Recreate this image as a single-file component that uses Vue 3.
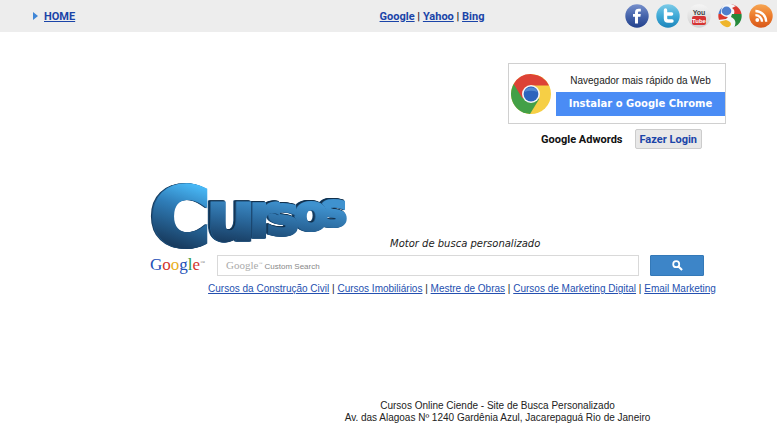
<template>
    <div class="page">
        <header class="topbar">
            <nav class="home">
                <svg class="arrow" viewBox="0 0 5 8" aria-hidden="true">
                    <path d="M0 0 L5 4 L0 8 Z" fill="#3f86d6" />
                </svg>
                <a href="#">HOME</a>
            </nav>
            <nav class="engines">
                <template v-for="(engine, i) in engines" :key="engine">
                    <span v-if="i > 0"> | </span><a href="#">{{ engine }}</a>
                </template>
            </nav>
            <nav class="social">
                <a href="#" aria-label="Facebook">
                    <svg viewBox="0 0 24 24">
                        <defs>
                            <linearGradient id="fb" x1="0" y1="0" x2="0" y2="1">
                                <stop offset="0" stop-color="#7790cc" />
                                <stop offset="0.5" stop-color="#4664ab" />
                                <stop offset="1" stop-color="#23418c" />
                            </linearGradient>
                        </defs>
                        <circle cx="12" cy="12" r="11.7" fill="url(#fb)" />
                        <path d="M10 19.5 V12.8 H8 V10 H10 V8.3 C10 5.8 11.4 4.7 13.6 4.7 H15.8 V7.5 H14.3 C13.3 7.5 13 7.9 13 8.8 V10 H15.8 L15.4 12.8 H13 V19.5 Z"
                            fill="#fff" />
                    </svg>
                </a>
                <a href="#" aria-label="Twitter">
                    <svg viewBox="0 0 24 24">
                        <defs>
                            <linearGradient id="tw" x1="0" y1="0" x2="0" y2="1">
                                <stop offset="0" stop-color="#7ccbe8" />
                                <stop offset="0.5" stop-color="#3fa9d6" />
                                <stop offset="1" stop-color="#1d85bb" />
                            </linearGradient>
                        </defs>
                        <circle cx="12" cy="12" r="11.7" fill="url(#tw)" />
                        <path d="M9.5 6 V14.5 C9.5 16.3 10.5 17 12 17 H16 M9.5 10 H15.6" fill="none" stroke="#fff"
                            stroke-width="3.4" stroke-linecap="round" />
                    </svg>
                </a>
                <a href="#" aria-label="YouTube">
                    <svg viewBox="0 0 24 24">
                        <defs>
                            <linearGradient id="yt" x1="0" y1="0" x2="0" y2="1">
                                <stop offset="0" stop-color="#f5f5f5" />
                                <stop offset="1" stop-color="#d2d2d2" />
                            </linearGradient>
                        </defs>
                        <circle cx="12" cy="12" r="11.7" fill="url(#yt)" />
                        <text x="12" y="11" class="yt-you">You</text>
                        <rect x="5" y="12" width="14" height="9" rx="2" fill="#d63434" />
                        <text x="12" y="19" class="yt-tube">Tube</text>
                    </svg>
                </a>
                <a href="#" aria-label="Google">
                    <svg viewBox="0 0 24 24">
                        <defs>
                            <clipPath id="ball">
                                <circle cx="12" cy="12" r="11.7" />
                            </clipPath>
                        </defs>
                        <g clip-path="url(#ball)">
                            <rect width="24" height="24" fill="#f4f6fa" />
                            <path d="M13 0 H24 V10 H16 C17 7 16 5 14 4 L18 2 Z" fill="#d9392f" />
                            <path d="M14 10 H24 V21 L16 24 C19 18 17 15 13 13 Z" fill="#26893b" />
                            <path d="M0 10 H3 C5 12 7 13 10 13 L8 15 L0 16 Z" fill="#d9392f" />
                            <path d="M0 18 L8 16 C11 17 13 18 13 20 C13 22 11 23 8 24 H0 Z" fill="#efb52b" />
                            <ellipse cx="8.5" cy="7" rx="4.8" ry="4.4" fill="#4f7fce" />
                            <path d="M0 8 C0 4 3 2 5 2 C3 4 3 7 3 10 H0 Z" fill="#4f7fce" />
                        </g>
                    </svg>
                </a>
                <a href="#" aria-label="RSS">
                    <svg viewBox="0 0 24 24">
                        <defs>
                            <linearGradient id="rss" x1="0" y1="0" x2="0" y2="1">
                                <stop offset="0" stop-color="#f6a552" />
                                <stop offset="0.5" stop-color="#ec7b2b" />
                                <stop offset="1" stop-color="#d8571a" />
                            </linearGradient>
                        </defs>
                        <circle cx="12" cy="12" r="11.7" fill="url(#rss)" />
                        <circle cx="8.3" cy="16" r="1.9" fill="#fff" />
                        <path d="M6.4 11.2 A6.6 6.6 0 0 1 13 17.8 M6.4 7 A10.8 10.8 0 0 1 17.2 17.8" fill="none"
                            stroke="#fff" stroke-width="2.3" />
                    </svg>
                </a>
            </nav>
        </header>

        <main>
            <aside class="promo">
                <div class="chrome-box">
                    <svg class="chrome-logo" viewBox="0 0 40 40" aria-hidden="true">
                        <circle cx="20" cy="20" r="20" fill="#f6cf45" />
                        <path d="M20 20 L2.7 10 A20 20 0 0 0 19 40 L28.2 25 Z" fill="#43a047" />
                        <path d="M2.7 10 A20 20 0 0 1 38 11.5 H20 L11.5 24.5 Z" fill="#dd4236" />
                        <circle cx="20" cy="20" r="9" fill="#f5f5f5" />
                        <circle cx="20" cy="20" r="7.4" fill="#2c64bd" />
                        <path d="M13.5 18 A7 7 0 0 1 26.5 18 Q20 15.5 13.5 18 Z" fill="#5289d2" />
                    </svg>
                    <div class="chrome-text">
                        <p>Navegador mais rápido da Web</p>
                        <button type="button">Instalar o Google Chrome</button>
                    </div>
                </div>
                <div class="adwords">
                    <strong>Google Adwords</strong>
                    <button type="button">Fazer Login</button>
                </div>
            </aside>

            <section class="search">
                <div class="brand">
                    <svg class="cursos" viewBox="0 0 200 70" role="img" aria-label="Cursos">
                        <defs>
                            <linearGradient id="face-big" gradientUnits="userSpaceOnUse" x1="56" y1="4" x2="36" y2="66">
                                <stop offset="0" stop-color="#4abcfa" />
                                <stop offset="0.4" stop-color="#2f7db8" />
                                <stop offset="1" stop-color="#183c60" />
                            </linearGradient>
                            <linearGradient id="face" gradientUnits="userSpaceOnUse" x1="100" y1="14" x2="94" y2="60">
                                <stop offset="0" stop-color="#3f92cf" />
                                <stop offset="0.5" stop-color="#2a689c" />
                                <stop offset="1" stop-color="#193f65" />
                            </linearGradient>
                        </defs>
                        <text v-for="letter in letters" :key="letter.x" :class="letter.char === 'C' ? 'big' : 'small'"
                            :x="letter.x" :y="letter.y" :font-size="letter.size">{{ letter.char }}</text>
                    </svg>
                    <em>Motor de busca personalizado</em>
                </div>

                <form class="search-form" @submit.prevent>
                    <label class="google" for="q">
                        <span v-for="(c, i) in 'Google'" :key="i" :class="googleColors[i]">{{ c }}</span><sup>™</sup>
                    </label>
                    <div class="field">
                        <input id="q" v-model="query" type="text">
                        <div v-if="!query" class="hint"><span>Google<sup>™</sup></span> Custom Search</div>
                    </div>
                    <button type="submit" aria-label="Pesquisar">
                        <svg viewBox="0 0 12 12">
                            <circle cx="4.6" cy="4.6" r="3.3" fill="none" stroke="#fff" stroke-width="1.9" />
                            <path d="M7 7 L11 11" stroke="#fff" stroke-width="2.2" />
                        </svg>
                    </button>
                </form>

                <nav class="courses">
                    <template v-for="(course, i) in courses" :key="course">
                        <span v-if="i > 0"> | </span><a href="#">{{ course }}</a>
                    </template>
                </nav>
            </section>
        </main>

        <footer>
            <p>Cursos Online Ciende - Site de Busca Personalizado</p>
            <p>Av. das Alagoas Nº 1240 Gardênia Azul, Jacarepaguá Rio de Janeiro</p>
        </footer>
    </div>
</template>

<script setup>
import { ref } from 'vue'

const query = ref('')

const engines = ['Google', 'Yahoo', 'Bing']

const courses = [
    'Cursos da Construção Civil',
    'Cursos Imobiliários',
    'Mestre de Obras',
    'Cursos de Marketing Digital',
    'Email Marketing'
]

const googleColors = ['blue', 'red', 'yellow', 'blue', 'green', 'red']

// back letters first, so that the ones in front cover their sides
const letters = [
    { char: 's', x: 170, y: 43, size: 46 },
    { char: 'o', x: 144, y: 47, size: 50 },
    { char: 's', x: 117, y: 51, size: 54 },
    { char: 'r', x: 99, y: 54, size: 60 },
    { char: 'u', x: 57, y: 57, size: 68 },
    { char: 'C', x: 2, y: 62, size: 78 }
]
</script>

<style>
body {
    margin: 0;
    background: #fff;
}
</style>

<style scoped>
.page {
    font-family: "Liberation Sans", Arial, sans-serif;
    font-size: 10px;
    line-height: 12px;
    color: #222;
}

p {
    margin: 0;
}

a {
    color: #1a44a8;
}

button {
    font-family: inherit;
    cursor: pointer;
}

.topbar {
    display: grid;
    grid-template-columns: 1fr auto 1fr;
    align-items: center;
    height: 32px;
    padding: 0 4px 0 33px;
    background: #ededed;
    font: bold 11px Roboto, sans-serif;
}

.engines {
    padding-left: 58px;
    white-space: pre;
}

.home {
    display: flex;
    align-items: center;
    gap: 6px;
}

.arrow {
    width: 5px;
    height: 8px;
}

.social {
    display: flex;
    justify-content: flex-end;
    gap: 7px;
}

.social svg {
    display: block;
    width: 24px;
    height: 24px;
}

.yt-you,
.yt-tube {
    font-family: "Liberation Sans", Arial, sans-serif;
    font-size: 7px;
    font-weight: bold;
    text-anchor: middle;
    fill: #444;
}

.yt-tube {
    font-size: 6px;
    fill: #fff;
}

main {
    padding: 31px 51px 0 150px;
}

.promo {
    display: flex;
    flex-direction: column;
    align-items: flex-end;
    gap: 5px;
}

.chrome-box {
    display: flex;
    align-items: center;
    gap: 5px;
    box-sizing: border-box;
    width: 218px;
    height: 61px;
    padding-left: 2px;
    border: 1px solid #d0d0d0;
}

.chrome-logo {
    flex: none;
    width: 40px;
    height: 40px;
}

.chrome-text {
    flex: 1;
    text-align: center;
}

.chrome-text p {
    margin: 3px 0 5px;
}

.chrome-text button {
    width: 100%;
    height: 24px;
    padding: 0;
    border: 0;
    background: #4a8cf5;
    color: #fff;
    font: bold 10px "DejaVu Sans", Verdana, sans-serif;
}

.adwords {
    display: flex;
    align-items: center;
    gap: 12px;
    padding-right: 24px;
    color: #111;
    font: 11px Roboto, sans-serif;
}

.adwords button {
    height: 20px;
    padding: 0 4px;
    border: 1px solid #ccc;
    border-radius: 2px;
    background: #e8e8e8;
    color: #1a44a8;
    font-size: 11px;
    font-weight: bold;
}

.brand {
    display: flex;
    align-items: flex-end;
    gap: 40px;
    margin-top: 34px;
}

.cursos {
    width: 200px;
    height: 70px;
    overflow: visible;
    font-family: "DejaVu Sans", sans-serif;
    font-weight: bold;
}

.big {
    fill: url(#face-big);
    stroke: url(#face-big);
    stroke-width: 6;
    filter: drop-shadow(-1px 0 0 #1f5584) drop-shadow(-1px 0 0 #173c5e);
}

.small {
    fill: url(#face);
    stroke: url(#face);
    stroke-width: 3;
    filter: drop-shadow(-1px 0 0 #1f5584) drop-shadow(-1px -1px 0 #122f4a) drop-shadow(-1px 0 0 #1b4a74);
}

.brand em {
    padding-bottom: 3px;
    font-family: "DejaVu Sans", Verdana, sans-serif;
}

.search-form {
    display: flex;
    align-items: center;
    gap: 11px;
    margin-top: 1px;
    padding-right: 22px;
}

.google {
    width: 56px;
    font-family: "Liberation Serif", serif;
    font-size: 17px;
    line-height: 22px;
    white-space: nowrap;
}

.google sup {
    font-size: 5px;
    color: #888;
    vertical-align: 6px;
    line-height: 1;
}

.blue {
    color: #2450b8;
}

.red {
    color: #d3352c;
}

.yellow {
    color: #e8b021;
}

.green {
    color: #2f9a3f;
}

.field {
    position: relative;
    flex: 1;
}

.field input {
    display: block;
    box-sizing: border-box;
    width: 100%;
    height: 21px;
    padding: 0 8px;
    border: 1px solid #d9d9d9;
    font: 11px "Liberation Sans", Arial, sans-serif;
}

.hint {
    position: absolute;
    top: 4px;
    left: 9px;
    font-size: 8px;
    color: #888;
    pointer-events: none;
}

.hint span {
    font-family: "Liberation Serif", serif;
    font-size: 11px;
    color: #aaa;
}

.hint sup {
    font-size: 4px;
    vertical-align: 4px;
    line-height: 1;
}

.search-form button {
    display: flex;
    align-items: center;
    justify-content: center;
    width: 54px;
    height: 21px;
    padding: 0;
    border: 1px solid #3479b8;
    border-radius: 1px;
    background: #3d85c8;
}

.search-form button svg {
    width: 11px;
    height: 11px;
}

.courses {
    margin-top: 7px;
    padding-left: 48px;
    text-align: center;
    white-space: pre;
}

.courses a {
    color: #2450b0;
}

footer {
    margin-top: 105px;
    padding-left: 218px;
    text-align: center;
}
</style>
